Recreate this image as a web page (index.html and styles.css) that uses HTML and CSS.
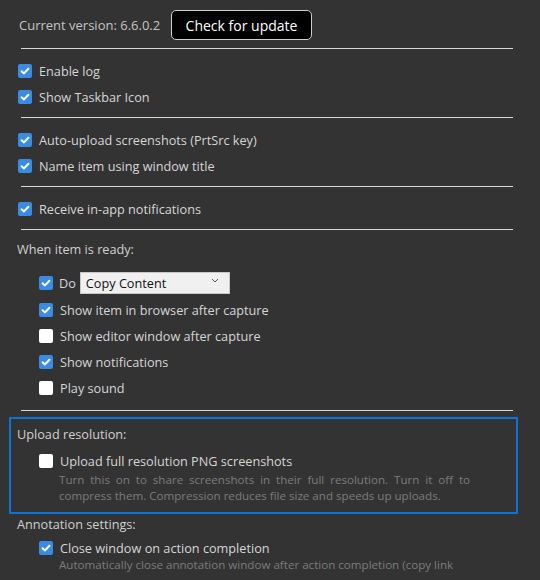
FILE: index.html
```html
<!DOCTYPE html>
<html lang="en">
<head>
    <meta charset="UTF-8">
    <title>Settings</title>
    <link rel="stylesheet" href="styles.css">
</head>
<body>
    <div class="settings">
        <div class="version-row">
            <span class="version">Current version: 6.6.0.2</span>
            <button class="update-btn">Check for update</button>
        </div>
        <hr class="divider">

        <div class="group">
            <label class="check-row"><span class="box checked"><svg viewBox="0 0 14 14"><path d="M3.6 7.2 L6 9.4 L10.4 4.8" /></svg></span>Enable log</label>
            <label class="check-row"><span class="box checked"><svg viewBox="0 0 14 14"><path d="M3.6 7.2 L6 9.4 L10.4 4.8" /></svg></span>Show Taskbar Icon</label>
        </div>
        <hr class="divider">

        <div class="group">
            <label class="check-row"><span class="box checked"><svg viewBox="0 0 14 14"><path d="M3.6 7.2 L6 9.4 L10.4 4.8" /></svg></span>Auto-upload screenshots (PrtSrc key)</label>
            <label class="check-row"><span class="box checked"><svg viewBox="0 0 14 14"><path d="M3.6 7.2 L6 9.4 L10.4 4.8" /></svg></span>Name item using window title</label>
        </div>
        <hr class="divider">

        <div class="group">
            <label class="check-row"><span class="box checked"><svg viewBox="0 0 14 14"><path d="M3.6 7.2 L6 9.4 L10.4 4.8" /></svg></span>Receive in-app notifications</label>
        </div>
        <hr class="divider">

        <div class="section-title">When item is ready:</div>
        <div class="indent">
            <div class="check-row do-row">
                <span class="box checked"><svg viewBox="0 0 14 14"><path d="M3.6 7.2 L6 9.4 L10.4 4.8" /></svg></span>Do
                <div class="select">
                    <span>Copy Content</span>
                    <svg class="chevron" viewBox="0 0 8 5"><path d="M1 1 L4 4 L7 1" /></svg>
                </div>
            </div>
            <label class="check-row"><span class="box checked"><svg viewBox="0 0 14 14"><path d="M3.6 7.2 L6 9.4 L10.4 4.8" /></svg></span>Show item in browser after capture</label>
            <label class="check-row"><span class="box"></span>Show editor window after capture</label>
            <label class="check-row"><span class="box checked"><svg viewBox="0 0 14 14"><path d="M3.6 7.2 L6 9.4 L10.4 4.8" /></svg></span>Show notifications</label>
            <label class="check-row"><span class="box"></span>Play sound</label>
        </div>
        <hr class="divider last">

        <div class="highlight">
            <div class="section-title">Upload resolution:</div>
            <div class="indent">
                <label class="check-row"><span class="box"></span>Upload full resolution PNG screenshots</label>
                <p class="desc">Turn this on to share screenshots in their full resolution. Turn it off to compress them. Compression reduces file size and speeds up uploads.</p>
            </div>
        </div>

        <div class="section-title annot-title">Annotation settings:</div>
        <div class="indent">
            <label class="check-row"><span class="box checked"><svg viewBox="0 0 14 14"><path d="M3.6 7.2 L6 9.4 L10.4 4.8" /></svg></span>Close window on action completion</label>
            <p class="desc single">Automatically close annotation window after action completion (copy link</p>
        </div>
    </div>
</body>
</html>
```

FILE: styles.css
```css
* {
    margin: 0;
    padding: 0;
    box-sizing: border-box;
}

body {
    background-color: #333333;
    font-family: 'Open Sans', 'Noto Sans', sans-serif;
    font-size: 12.7px;
    color: #d6d6d6;
    overflow: hidden;
}

.settings {
    padding: 10px 0 0 17px;
}

.version-row {
    display: flex;
    align-items: center;
    height: 30px;
}

.version {
    color: #c4c4c4;
    font-size: 13px;
    padding-left: 2px;
    width: 154px;
}

.update-btn {
    width: 141px;
    height: 30px;
    background-color: #000;
    color: #fff;
    border: 1px solid #cfcfcf;
    border-radius: 5px;
    font-family: inherit;
    font-size: 14px;
}

.divider {
    border: none;
    border-top: 1px solid #d8d8d8;
    width: 492px;
    margin: 8px 0 9px 4px;
}

.group + .divider {
    margin-top: 7px;
}

.divider.last {
    margin: 9px 0 6px 4px;
}

.check-row {
    display: flex;
    align-items: center;
    height: 26px;
    gap: 7px;
}

.box {
    width: 14px;
    height: 14px;
    border-radius: 2px;
    background-color: #fff;
    display: flex;
    flex-shrink: 0;
    margin-left: 1px;
}

.box.checked {
    background-color: #3a8be2;
}

.box svg {
    width: 14px;
    height: 14px;
}

.box svg path {
    fill: none;
    stroke: #fff;
    stroke-width: 2;
    stroke-linecap: round;
    stroke-linejoin: round;
}

.section-title {
    height: 20px;
    line-height: 20px;
    color: #d0d0d0;
}

.indent {
    padding-left: 21px;
}

.do-row {
    height: 29px;
    margin-top: 9px;
    gap: 6px;
}

.select {
    width: 150px;
    height: 22px;
    margin-left: -2px;
    background-color: #f0f0f0;
    border: 1px solid #c8c8c8;
    color: #111;
    display: flex;
    align-items: center;
    justify-content: space-between;
    padding: 0 10px 0 5px;
}

.chevron {
    width: 8px;
    height: 5px;
    margin-top: -4px;
}

.chevron path {
    fill: none;
    stroke: #555;
    stroke-width: 1;
}

.highlight {
    margin-left: -8px;
    width: 509px;
    height: 97px;
    border: 2px solid #0a74d8;
    padding: 5px 0 0 6px;
}

.highlight .check-row {
    margin-top: 4px;
}

.desc {
    color: #7c7c7c;
    font-size: 11.6px;
    line-height: 16px;
    width: 432px;
    padding-left: 21px;
    margin-top: -2px;
    text-align: justify;
}

.desc.single {
    white-space: nowrap;
    margin-top: -4px;
}

.annot-title {
    margin-top: 0;
}

.annot-title + .indent .check-row {
    margin-top: 1px;
}
```
